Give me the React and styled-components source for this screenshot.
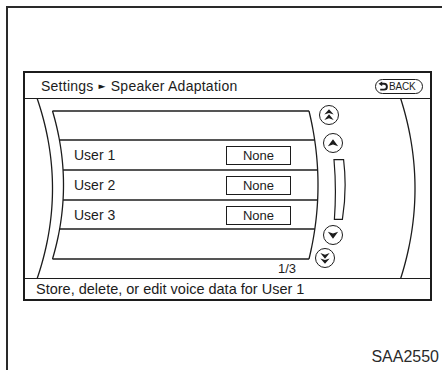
import React from "react"
import styled, { createGlobalStyle } from "styled-components"

// page offset of the body area inside the screen
const OX = 25
const OY = 99

const curve = (peak, edge, y0, y1) => y => {
  const ym = (y0 + y1) / 2
  const k = (y - ym) / ((y1 - y0) / 2)
  return peak - (peak - edge) * k * k
}

const leftOuter = curve(52.5, 37, 98, 279)
const listLeft = curve(63.5, 52.5, 111, 259)
const listRight = curve(318, 309, 111, 259)
const rightOuter = curve(415, 400.5, 98, 279)

const poly = (fn, y0, y1) => {
  const pts = []
  for (let y = y0; y <= y1; y += 3) pts.push(`${fn(y) - OX},${y - OY}`)
  pts.push(`${fn(y1) - OX},${y1 - OY}`)
  return pts.join(" ")
}

const listLines = [111, 140, 170, 200, 229, 259]

const users = [
  { name: "User 1", h: 30 },
  { name: "User 2", h: 30 },
  { name: "User 3", h: 29 }
]

const GlobalStyle = createGlobalStyle`
  body {
    margin: 0;
    background: #fff;
    font-family: "Liberation Sans", Arial, sans-serif;
    color: #1c1c1c;
    overflow: hidden;
  }
`

const PanelArt = () => (
  <Art width="405" height="179" viewBox="0 0 405 179">
    <polyline points={poly(leftOuter, 98, 279)} />
    <polyline points={poly(rightOuter, 98, 279)} />
    <polyline points={poly(listLeft, 111, 259)} />
    <polyline points={poly(listRight, 111, 259)} />
    {listLines.map(y => (
      <line key={y} x1={listLeft(y) - OX} y1={y - OY} x2={listRight(y) - OX} y2={y - OY} />
    ))}
  </Art>
)

const Arrow = ({ double, down }) => (
  <svg width="14" height="14" viewBox="0 0 12 12">
    <g transform={down ? "rotate(180 6 6)" : undefined} fill="#1c1c1c">
      {double ? (
        <>
          <path d="M6 1 L10 5.6 L6 4.3 L2 5.6 Z" />
          <path d="M6 5.4 L10 10.2 L6 8.8 L2 10.2 Z" />
        </>
      ) : (
        <path d="M6 2.8 L10.4 8.8 L6 7.2 L1.6 8.8 Z" />
      )}
    </g>
  </svg>
)

const BackIcon = () => (
  <svg width="10" height="10" viewBox="0 0 10 10">
    <path d="M3.6 2.8 H6 A2.9 2.9 0 0 1 6 8.6 H2.2" fill="none" stroke="#1c1c1c" strokeWidth="1.9" />
    <path d="M0.6 2.8 L4.2 0.4 L4.2 5.2 Z" fill="#1c1c1c" />
  </svg>
)

const App = () => (
  <>
    <GlobalStyle />
    <Frame>
      <Screen>
        <Header>
          <Title>
            Settings <Sep>►</Sep> Speaker Adaptation
          </Title>
          <BackButton>
            <BackIcon />
            BACK
          </BackButton>
        </Header>
        <Body>
          <PanelArt />
          <List>
            <Row $h={29} />
            {users.map(u => (
              <Row key={u.name} $h={u.h}>
                <Label>{u.name}</Label>
                <ValueBox>None</ValueBox>
              </Row>
            ))}
            <Row $h={30} />
            <Pager>1/3</Pager>
          </List>
          <ScrollColumn>
            <RoundButton $dx={6} $dy={0}>
              <Arrow double />
            </RoundButton>
            <RoundButton $dx={10} $dy={8}>
              <Arrow />
            </RoundButton>
            <ScrollTrack $dx={20} $dy={6}>
              <svg width="14" height="61" viewBox="0 0 14 61">
                <path d="M1 0.7 L10.6 0.7 Q14.2 30 9.4 60.3 L1.4 60.3 Q3.6 30 1 0.7 Z" fill="none" stroke="#1c1c1c" strokeWidth="1.2" />
              </svg>
            </ScrollTrack>
            <RoundButton $dx={10} $dy={5}>
              <Arrow down />
            </RoundButton>
            <RoundButton $dx={2} $dy={3}>
              <Arrow double down />
            </RoundButton>
          </ScrollColumn>
        </Body>
        <Footer>Store, delete, or edit voice data for User 1</Footer>
      </Screen>
      <Caption>SAA2550</Caption>
    </Frame>
  </>
)

export default App

const Frame = styled.div`
  margin: 6px 0 0 6px;
  height: 364px;
  box-sizing: border-box;
  border-left: 2px solid #2a2a2a;
  border-top: 2px solid #2a2a2a;
  padding: 63px 3px 0 15px;
  display: flex;
  flex-direction: column;
`

const Screen = styled.div`
  width: 409px;
  height: 230px;
  box-sizing: border-box;
  border: 2px solid #1c1c1c;
  display: flex;
  flex-direction: column;
`

const Header = styled.div`
  height: 26px;
  box-sizing: border-box;
  border-bottom: 1px solid #1c1c1c;
  padding: 0 7px 0 16px;
  display: flex;
  align-items: center;
  justify-content: space-between;
`

const Title = styled.div`
  font-size: 14px;
  letter-spacing: 0.25px;
  display: flex;
  align-items: center;
  gap: 5px;
`

const Sep = styled.span`
  font-size: 9px;
  font-family: "DejaVu Sans", sans-serif;
`

const BackButton = styled.div`
  width: 48px;
  height: 15px;
  box-sizing: border-box;
  border: 1.4px solid #1c1c1c;
  border-radius: 8px;
  display: flex;
  align-items: center;
  gap: 1px;
  padding-left: 2px;
  font-size: 10px;
  letter-spacing: -0.2px;
  margin-top: 1px;
`

const Body = styled.div`
  flex: 1;
  position: relative;
  padding: 12px 0 0 27px;
`

const Art = styled.svg`
  position: absolute;
  left: 0;
  top: 0;
  fill: none;
  stroke: #1c1c1c;
  stroke-width: 1.3;
`

const List = styled.div`
  position: relative;
  width: 266px;
  display: flex;
  flex-direction: column;
`

const Row = styled.div`
  height: ${p => p.$h}px;
  display: flex;
  align-items: center;
  padding-left: 22px;
`

const Label = styled.div`
  width: 152px;
  font-size: 14px;
`

const ValueBox = styled.div`
  width: 65px;
  height: 19px;
  box-sizing: border-box;
  border: 1.3px solid #1c1c1c;
  display: flex;
  align-items: center;
  justify-content: center;
  font-size: 13px;
  margin-top: 1px;
`

const Pager = styled.div`
  width: 244px;
  text-align: right;
  font-size: 13px;
  padding-top: 2px;
`

const ScrollColumn = styled.div`
  position: absolute;
  left: 288px;
  top: 6px;
  display: flex;
  flex-direction: column;
  align-items: flex-start;
`

const RoundButton = styled.div`
  width: 20px;
  height: 20px;
  box-sizing: border-box;
  border: 1.4px solid #1c1c1c;
  border-radius: 50%;
  background: #fff;
  display: flex;
  align-items: center;
  justify-content: center;
  margin-left: ${p => p.$dx}px;
  margin-top: ${p => p.$dy}px;
`

const ScrollTrack = styled.div`
  display: flex;
  margin-left: ${p => p.$dx}px;
  margin-top: ${p => p.$dy}px;
`

const Footer = styled.div`
  height: 21px;
  box-sizing: border-box;
  border-top: 1px solid #1c1c1c;
  padding-left: 11px;
  display: flex;
  align-items: center;
  font-size: 14.5px;
`

const Caption = styled.div`
  align-self: flex-end;
  margin-top: 47px;
  font-size: 16px;
  color: #2a2a2a;
`
